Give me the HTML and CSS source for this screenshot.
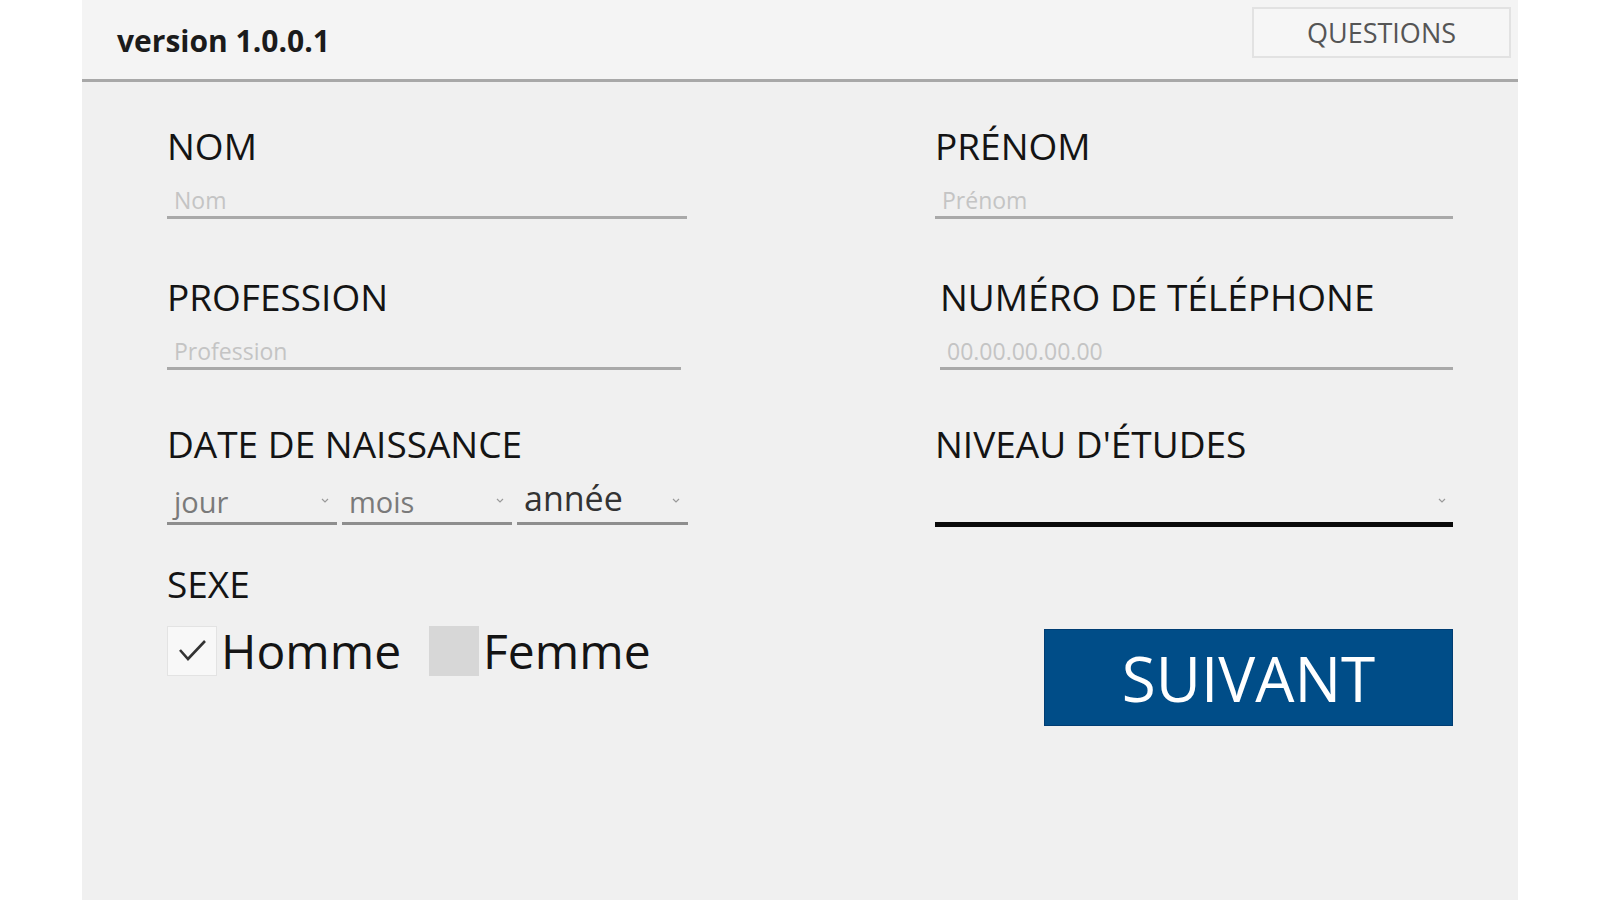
FILE: index.html
```html
<!DOCTYPE html>
<html lang="fr">
<head>
<meta charset="utf-8">
<title>Formulaire</title>
<link rel="stylesheet" href="styles.css">
</head>
<body>
<div class="app">
  <header class="topbar">
    <div class="version">version 1.0.0.1</div>
    <button class="questions">QUESTIONS</button>
  </header>
  <main class="form">
    <div class="row row-1">
      <div class="field">
        <div class="label">NOM</div>
        <input class="text-input" type="text" placeholder="Nom">
      </div>
      <div class="field">
        <div class="label">PRÉNOM</div>
        <input class="text-input" type="text" placeholder="Prénom">
      </div>
    </div>
    <div class="row row-2">
      <div class="field field-narrow">
        <div class="label">PROFESSION</div>
        <input class="text-input" type="text" placeholder="Profession">
      </div>
      <div class="field field-shift">
        <div class="label">NUMÉRO DE TÉLÉPHONE</div>
        <input class="text-input" type="text" placeholder="00.00.00.00.00">
      </div>
    </div>
    <div class="row row-3">
      <div class="field">
        <div class="label">DATE DE NAISSANCE</div>
        <div class="date-selects">
          <div class="select"><span class="select-text muted">jour</span><svg class="chevron" width="8" height="5" viewBox="0 0 8 5"><polyline points="1,1 4,4 7,1" fill="none" stroke="#9a9a9a" stroke-width="1.2"/></svg></div>
          <div class="select"><span class="select-text muted">mois</span><svg class="chevron" width="8" height="5" viewBox="0 0 8 5"><polyline points="1,1 4,4 7,1" fill="none" stroke="#9a9a9a" stroke-width="1.2"/></svg></div>
          <div class="select"><span class="select-text strong">année</span><svg class="chevron" width="8" height="5" viewBox="0 0 8 5"><polyline points="1,1 4,4 7,1" fill="none" stroke="#9a9a9a" stroke-width="1.2"/></svg></div>
        </div>
      </div>
      <div class="field">
        <div class="label">NIVEAU D'ÉTUDES</div>
        <div class="select select-dark"><span class="select-text"></span><svg class="chevron" width="8" height="5" viewBox="0 0 8 5"><polyline points="1,1 4,4 7,1" fill="none" stroke="#9a9a9a" stroke-width="1.2"/></svg></div>
      </div>
    </div>
    <div class="row row-4">
      <div class="field">
        <div class="label">SEXE</div>
        <div class="checks">
          <div class="check">
            <span class="box box-on"><svg width="50" height="50" viewBox="0 0 50 50"><polyline points="13,24 21,33 38,15" fill="none" stroke="#333" stroke-width="2.6"/></svg></span>
            <span class="check-label">Homme</span>
          </div>
          <div class="check">
            <span class="box box-off"></span>
            <span class="check-label">Femme</span>
          </div>
        </div>
      </div>
      <button class="next">SUIVANT</button>
    </div>
  </main>
</div>
</body>
</html>
```
FILE: styles.css
```css
html, body {
  margin: 0;
  padding: 0;
  background: #ffffff;
  font-family: "Open Sans", "Liberation Sans", sans-serif;
}

.app {
  width: 1436px;
  height: 900px;
  margin-left: 82px;
  background: #f0f0f0;
  overflow: hidden;
}

.topbar {
  display: flex;
  justify-content: space-between;
  align-items: flex-start;
  height: 79px;
  background: #f4f4f4;
  border-bottom: 3px solid #a8a8a8;
}

.version {
  margin: 21px 0 0 35px;
  font-size: 30px;
  line-height: 40px;
  font-weight: 700;
  color: #1b1b1b;
}

.questions {
  margin: 7px 7px 0 0;
  width: 259px;
  height: 51px;
  border: 2px solid #e2e2e2;
  background: #f6f6f6;
  font-family: "Open Sans", "Liberation Sans", sans-serif;
  font-size: 27px;
  color: #555555;
  padding: 0;
}

.form {
  padding: 42px 0 0 85px;
}

.row {
  display: grid;
  grid-template-columns: 520px 518px;
  column-gap: 248px;
}

.row-2 { margin-top: 56px; }
.row-3 { margin-top: 52px; }
.row-4 { margin-top: 35px; }

.field-narrow { width: 514px; }
.field-shift { margin-left: 5px; }

.label {
  font-size: 37px;
  line-height: 44px;
  color: #141414;
  white-space: nowrap;
}

.text-input {
  display: block;
  width: 100%;
  height: 51px;
  box-sizing: border-box;
  margin: 0;
  padding: 15px 7px 0;
  border: none;
  border-bottom: 3px solid #a9a9a9;
  background: transparent;
  font-family: "Open Sans", "Liberation Sans", sans-serif;
  font-size: 23px;
  color: #333;
  outline: none;
}

.text-input::placeholder {
  color: #c4c4c4;
  opacity: 1;
}

.date-selects {
  display: grid;
  grid-template-columns: 170px 170px 171px;
  column-gap: 5px;
}

.select {
  display: flex;
  justify-content: space-between;
  align-items: flex-end;
  height: 56px;
  padding: 0 8px 0 7px;
  border-bottom: 3px solid #8e8e8e;
}

.select-text {
  padding-bottom: 1px;
  white-space: nowrap;
}

.select-text.muted {
  font-size: 29px;
  color: #7a7a7a;
}

.select-text.strong {
  font-size: 34px;
  color: #333333;
}

.chevron {
  margin-bottom: 19px;
  flex: none;
}

.select-dark {
  border-bottom: 5px solid #0a0a0a;
  padding-right: 7px;
}

.checks {
  display: flex;
  align-items: center;
  margin-top: 13px;
  height: 64px;
}

.check {
  display: flex;
  align-items: center;
  margin-right: 28px;
}

.box {
  display: block;
  width: 50px;
  height: 50px;
  box-sizing: border-box;
  flex: none;
}

.box-on {
  background: #f8f8f8;
  border: 1px solid #e3e3e3;
}

.box-on svg {
  display: block;
  margin: -1px;
}

.box-off {
  background: #d7d7d7;
}

.check-label {
  margin-left: 4px;
  font-size: 48px;
  line-height: 64px;
  color: #141414;
}

.next {
  justify-self: end;
  margin-top: 67px;
  width: 409px;
  height: 97px;
  padding: 0;
  border: 1px solid #003d73;
  background: #004d88;
  color: #ffffff;
  font-family: "Open Sans", "Liberation Sans", sans-serif;
  font-size: 62px;
}
```
